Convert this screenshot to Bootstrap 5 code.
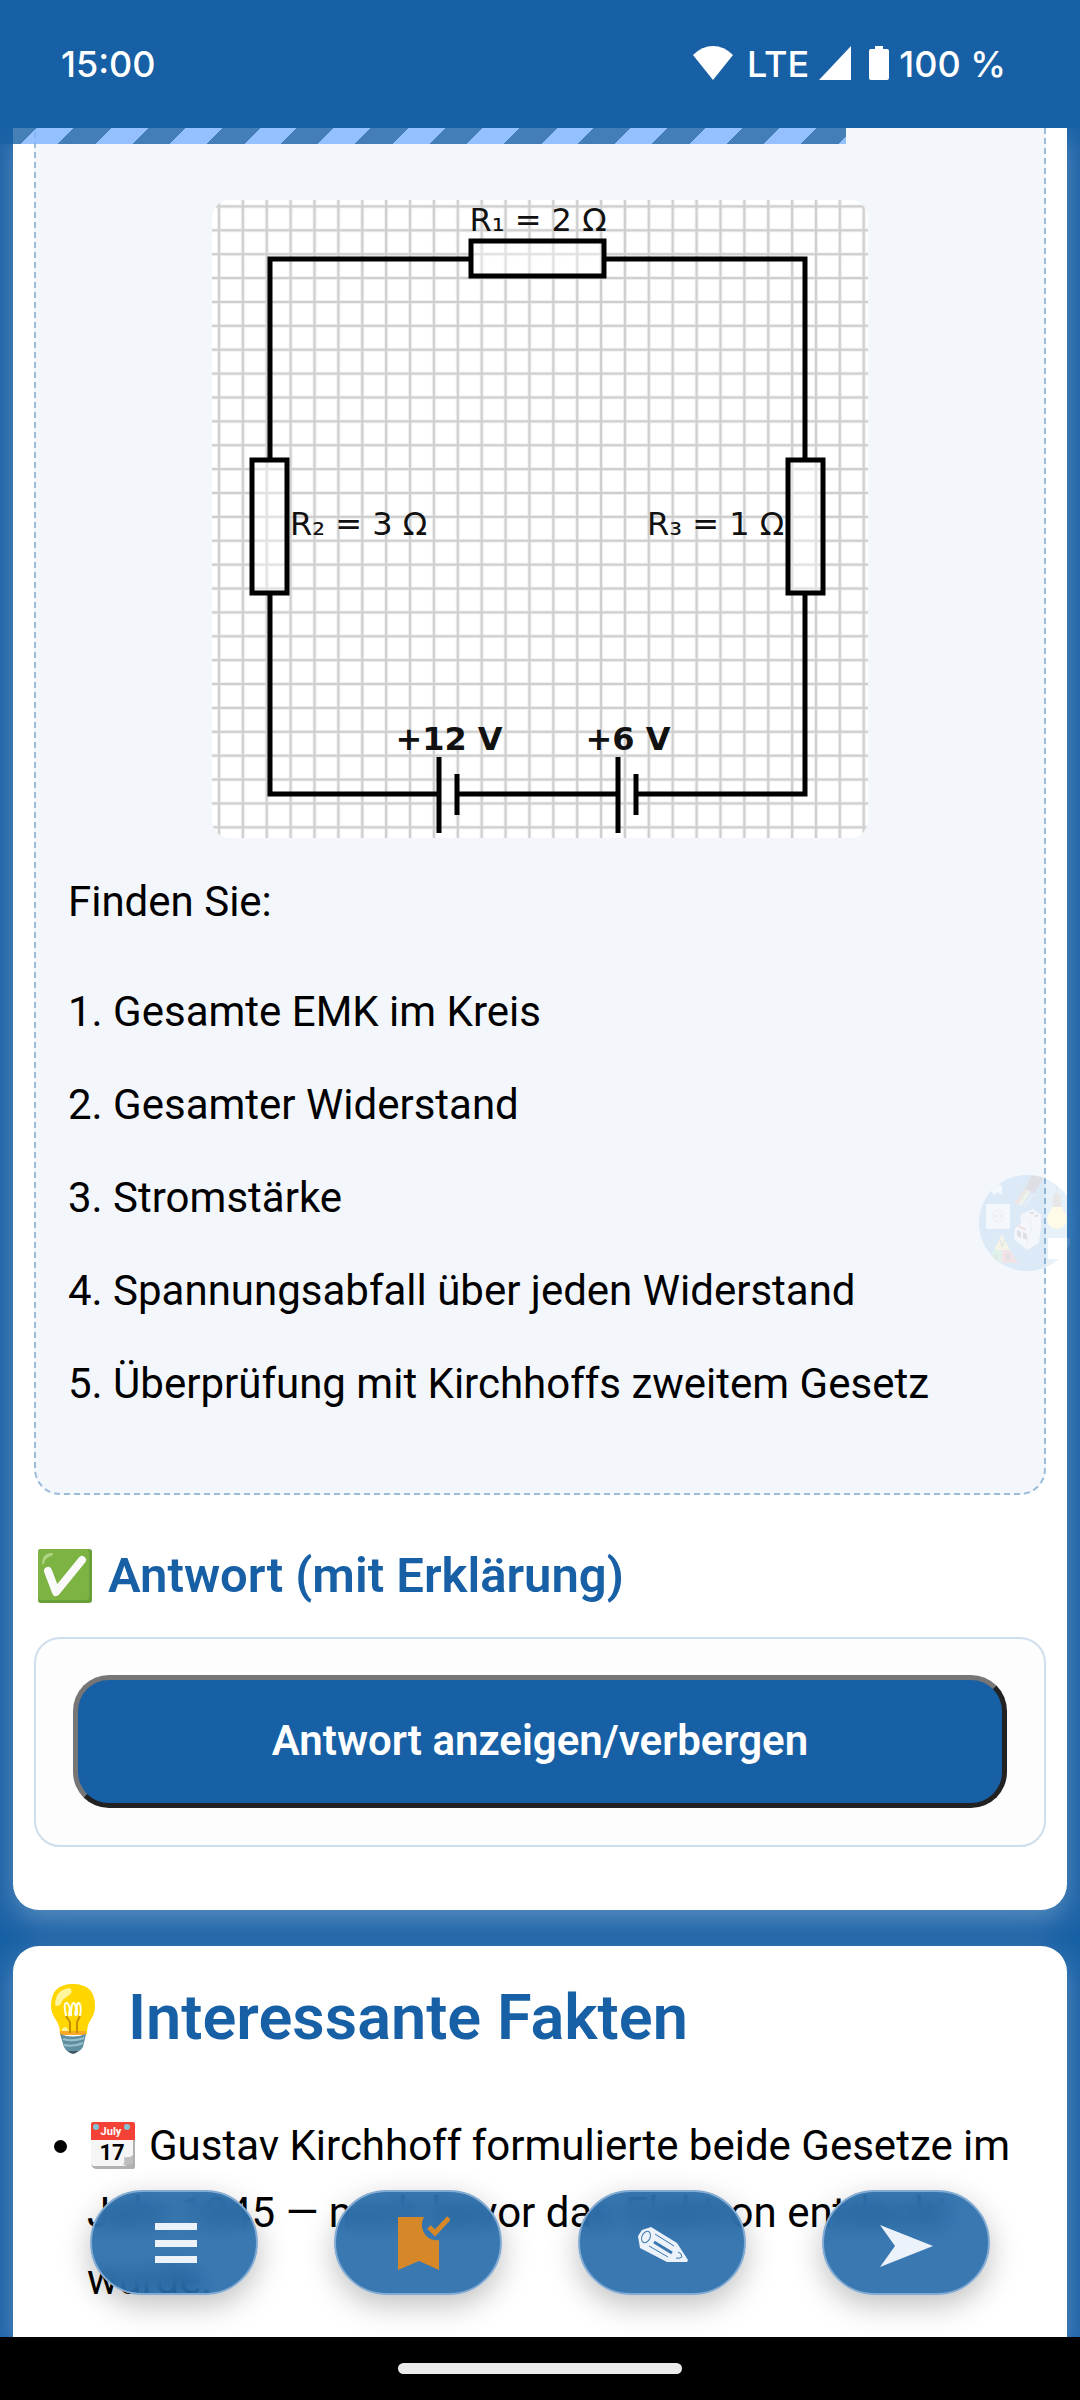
<!DOCTYPE html>
<html lang="de">
<head>
<meta charset="utf-8">
<meta name="viewport" content="width=device-width, initial-scale=1">
<title>Kirchhoffsche Gesetze</title>
<link href="https://cdn.jsdelivr.net/npm/bootstrap@5.3.0/dist/css/bootstrap.min.css" rel="stylesheet">
<style>
  :root { --brand: #1860a5; }
  body { background: var(--brand); color: #000; font-family: Roboto, sans-serif; font-size: 42px; line-height: 67px; }
  .status-bar { height: 128px; background: var(--brand); color: #fff; padding: 0 74px 0 61px; font: 500 36px/44px "Inter", sans-serif; }
  .status-bar svg, .fab svg { display: block; }
  .status-right { gap: 10px; }
  .status-right svg { margin-bottom: 2px; }
  .lesson { min-height: 0; padding: 0 13px; }
  .read-progress { top: 0; left: 0; width: 100%; height: 16px; z-index: 3; }
  .read-progress div { height: 16px; background: repeating-linear-gradient(135deg, rgba(24,96,165,.8) 0 26px, rgba(124,180,255,.8) 26px 52px, rgba(24,96,165,.8) 52px 79px, rgba(124,180,255,.8) 79px 105px); }
  .panel { background: #fff; border-radius: 26px; box-shadow: 0 10px 31px rgba(255,255,255,.3); padding: 0 21px 63px; }
  .panel-top { border-top-left-radius: 0; border-top-right-radius: 0; }
  .panel-end { margin-top: 36px; padding: 34px 21px 0; border-bottom-left-radius: 0; border-bottom-right-radius: 0; }
  .task { background: #f3f6fb; border: 2px dashed #9bbbdb; border-top: 0; border-radius: 0 0 26px 26px; padding: 72px 32px 50px; }
  .circuit { display: block; width: 70%; max-width: 656px; border-radius: 18px; margin: 0 auto 30px; }
  .task p { margin-bottom: 26px; }
  .task .intro { margin-bottom: 43px; }
  h2, h3 { color: var(--brand); font-weight: 600; }
  h3 { font-size: 49px; line-height: 60px; margin: 51px 0 31px; gap: 12px; }
  h2 { font-size: 63px; line-height: 76px; margin-bottom: 56px; gap: 21px; }
  .answer { background: #fdfdfd; border: 2px solid #cfdeec; border-radius: 26px; padding: 36px 37px 37px; }
  .btn-answer { background: var(--brand); color: #fff; border: 5px solid; border-color: #767676 #222 #222 #767676; border-radius: 36px; height: 133px; padding: 5px 12px 8px; font-size: 42px; font-weight: 600; }
  .btn-answer:hover { background: var(--brand); color: #fff; }
  .facts { padding-left: 53px; }
  .facts svg { vertical-align: -9px; margin: 0 14px 0 4px; }
  .helper { top: 1047px; right: 5px; width: 96px; height: 96px; z-index: 2; opacity: .11; border: 0; padding: 0; background: none; }
  .helper svg { display: block; }
  .fabs { left: 0; right: 0; bottom: 42px; gap: 76px; z-index: 4; }
  .fab { width: 168px; height: 105px; border-radius: 53px; border: 2px solid #82abd3; background: rgba(24,96,165,.85); backdrop-filter: blur(10px); box-shadow: 0 10px 31px rgba(0,0,0,.25); padding: 0; color: #ecf2f9; }
  .home-bar { height: 63px; background: #000; padding-top: 26px; }
  .home-bar div { width: 284px; height: 11px; border-radius: 6px; background: #ebebeb; }
</style>
</head>
<body>
<div class="d-flex flex-column vh-100 overflow-hidden">
  <header class="status-bar d-flex align-items-center justify-content-between flex-shrink-0">
    <span>15:00</span>
    <div class="status-right d-flex align-items-center">
      <svg width="40" height="34" viewBox="0 0 40 34" fill="#fff"><path d="M0 9Q9 0 20 0T40 9L20 34Z"/></svg>
      <span class="ms-1">LTE</span>
      <svg width="32" height="34" viewBox="0 0 32 34" fill="#fff"><path d="M32 0V34H0Z"/></svg>
      <svg class="ms-2" width="20" height="34" viewBox="0 0 20 34" fill="#fff"><path d="M6 0h8v3h4q2 0 2 2v27q0 2-2 2H2q-2 0-2-2V5q0-2 2-2h4Z"/></svg>
      <span>100 %</span>
    </div>
  </header>

  <main class="lesson position-relative flex-grow-1 overflow-hidden d-flex flex-column">
    <div class="read-progress position-absolute"><div style="width:78.3%"></div></div>

    <section class="panel panel-top flex-shrink-0">
      <div class="task">
        <svg class="circuit" viewBox="0 0 656 638" role="img" aria-label="Stromkreis mit drei Widerständen">
          <defs><pattern id="grid" x="-5" y="-5.5" width="23.88" height="23.88" patternUnits="userSpaceOnUse"><g fill="none" stroke="#000"><path d="M0 12H24M12 0V24" stroke-opacity=".06" stroke-width="4"/><path d="M0 12H24M12 0V24" stroke-opacity=".14" stroke-width="2"/></g></pattern></defs>
          <rect width="656" height="638" fill="#fff"/>
          <rect width="656" height="638" fill="url(#grid)"/>
          <g fill="none" stroke="#000" stroke-width="5">
            <path d="M259 59H58V260M392 59H593V260M58 393V594H227M245 594H406M424 594H593V393"/>
            <path d="M259 41H392V76H259ZM40 260H75V393H40ZM576 260H611V393H576Z" fill="#fff" fill-opacity=".4"/>
            <path d="M227 557V633M245 574V615M406 557V633M424 574V615"/>
          </g>
          <g font-family="DejaVu Sans, sans-serif" font-size="32" fill="#111">
            <text x="326" y="31" text-anchor="middle">R₁ = 2 Ω</text>
            <text x="78" y="335">R₂ = 3 Ω</text>
            <text x="435" y="335">R₃ = 1 Ω</text>
            <g font-weight="700" text-anchor="middle"><text x="237" y="550">+12 V</text><text x="416" y="550">+6 V</text></g>
          </g>
        </svg>
        <p class="intro">Finden Sie:</p>
        <p>1. Gesamte EMK im Kreis</p>
        <p>2. Gesamter Widerstand</p>
        <p>3. Stromstärke</p>
        <p>4. Spannungsabfall über jeden Widerstand</p>
        <p>5. Überprüfung mit Kirchhoffs zweitem Gesetz</p>
      </div>

      <h3 class="d-flex align-items-center">
        <svg width="62" height="60" viewBox="0 0 62 60" aria-hidden="true"><rect x="4" y="3" width="54" height="54" rx="3" fill="#689f38"/><rect x="4" y="3" width="51" height="51" rx="3" fill="#7cb342"/><path d="M8 18Q8 7 18 7Q21 8 17 10Q11 12 10 17Q9 20 8 18Z" fill="#aed581"/><path d="M14 25L22 46L48 14" fill="none" stroke="#fafafa" stroke-width="8" stroke-linecap="round" stroke-linejoin="round"/></svg>
        <span>Antwort (mit Erklärung)</span>
      </h3>
      <div class="answer">
        <button type="button" class="btn btn-answer w-100">Antwort anzeigen/verbergen</button>
      </div>
    </section>

    <section class="panel panel-end flex-grow-1">
      <h2 class="d-flex align-items-center">
        <svg width="73" height="76" viewBox="0 0 73 76" aria-hidden="true"><path d="M17 26Q17 4 39 4T61 26Q61 34 56 41Q53 45 53 54H26Q26 46 22 40Q17 33 17 26Z" fill="#ffd600"/><path d="M21 24Q22 9 36 8Q40 12 34 16Q28 19 27 24Q22 28 21 24Z" fill="#fff59d"/><path d="M28 53Q27 47 32 47L37 53Z" fill="#fff59d"/><path d="M26 51H52V55H26Z" fill="#f9a825"/><path d="M36 53V42L32 36M43 53V42L46 36" fill="none" stroke="#c58f00" stroke-width="2"/><path d="M32 36Q29 22 33 23Q37 26 35 34Q35 36 37 35Q37 22 40 23Q43 26 41 34Q42 36 43 34Q42 22 45 23Q48 26 46 36" fill="none" stroke="#fffde7" stroke-width="2"/><path d="M26 54Q39 59 52 54L49 67Q45 73 39 73T30 67Z" fill="#5f8fa1"/><path d="M29 59Q39 62 50 58M30 65Q40 67 49 63" fill="none" stroke="#97c0cc" stroke-width="2"/><path d="M34 71H44Q42 74 39 74T34 71Z" fill="#455a64"/></svg>
        <span>Interessante Fakten</span>
      </h2>
      <ul class="facts mb-0">
        <li><svg width="44" height="47" viewBox="0 0 44 47" aria-hidden="true"><path d="M2 4H44V45Q44 47 42 47H6Q1 47 0 42Z" fill="#b0b0b0"/><path d="M0 16H42V36L34 44H3Q0 44 0 41Z" fill="#f5f5f5"/><path d="M2 0H42Q44 0 44 2V18H0V2Q0 0 2 0Z" fill="#f44336"/><path d="M32 43Q34 41 33 35Q39 36 42 33V41Q41 43 32 43Z" fill="#bdbdbd"/><circle cx="5" cy="5" r="3" fill="#82c4d4"/><circle cx="36" cy="5" r="3" fill="#82c4d4"/><text x="20" y="13" font-size="11" font-weight="700" fill="#fff" text-anchor="middle">July</text><text x="21" y="38" font-size="22" font-weight="700" text-anchor="middle">17</text></svg>Gustav Kirchhoff formulierte beide Gesetze im Jahr 1845 — noch bevor das Elektron entdeckt wurde.</li>
      </ul>
    </section>

    <button type="button" class="helper position-absolute" aria-label="Elektro-Assistent">
      <svg width="96" height="96" viewBox="0 0 96 96"><defs><clipPath id="disc"><circle cx="48" cy="48" r="48"/></clipPath></defs><g clip-path="url(#disc)">
        <rect width="96" height="96" fill="#2c86cf"/>
        <path d="M10 12l6-5 7 4v9l-5-3-3 4z" fill="#fff"/>
        <path d="M53 0H66L55 19L46 14Z" fill="#333"/><path d="M47 14L37 29" stroke="#c96b35" stroke-width="3"/><path d="M50 16L41 30" stroke="#f1df54" stroke-width="3"/><path d="M54 18L45 32" stroke="#77aee0" stroke-width="3"/>
        <rect x="7" y="29" width="24" height="25" rx="1" fill="#fff"/><circle cx="19" cy="41" r="6" fill="#eee" stroke="#bbb"/><path d="M16 41h1m4 0h1" stroke="#333" stroke-width="2"/>
        <path d="M41 40L54 34L62 40V51L60 68L48 75L35 64L36 53L42 49Z" fill="#f8f8f8"/><path d="M41 40L52 45V55L47 73" fill="none" stroke="#bbb"/><path d="M38 55l4 2v6l-4-2zm6 2l4 2v6l-4-2zM51 37h4v2h-4zm5 3h3v2h-3z" fill="#333"/><path d="M39 51l8 4" stroke="#d33" stroke-width="2"/>
        <path d="M23 59L31 75H15Z" fill="#f3e04e"/><path d="M15 75H23V88H9Z" fill="#4ec365"/><path d="M23 75H31L39 88H23Z" fill="#e9515a"/>
        <text x="23" y="72" font-size="9" text-anchor="middle">V</text><text x="17" y="86" font-size="9" text-anchor="middle">I</text><text x="29" y="86" font-size="9" text-anchor="middle">R</text>
        <path d="M78 0V20" stroke="#222"/><path d="M75 19h6l2 14H73z" fill="#333"/><circle cx="78" cy="44" r="10" fill="#ffe033"/><path d="M73 32h10l3 8H70z" fill="#ffe033"/>
        <rect x="69" y="63" width="22" height="21" fill="#fff"/></g></svg>
    </button>

    <nav class="fabs position-absolute d-flex justify-content-center" aria-label="Werkzeuge">
      <button type="button" class="fab" aria-label="Menü"><svg class="mx-auto" width="64" height="60" viewBox="-2 0 64 60" fill="currentColor"><path d="M11 10H53V17H11ZM11 27H53V34H11ZM11 43H53V50H11Z"/></svg></button>
      <button type="button" class="fab" aria-label="Lesezeichen"><svg class="mx-auto" width="64" height="60" viewBox="-2 0 64 60" fill="#d68828"><path d="M10 4H36C30 15 38 29 51 27V57L31 48L10 57Z"/><path d="M41 14L47 20L61 5" fill="none" stroke="#d68828" stroke-width="5"/></svg></button>
      <button type="button" class="fab" aria-label="Notiz"><svg class="mx-auto" width="64" height="60" viewBox="-2 0 64 60" fill="currentColor"><path d="M6 23L10 17L19 14L45 30L56 47L55 49H35L8 35Z"/><g fill="none" stroke="#3a77b1" stroke-width="1"><ellipse cx="14" cy="24" rx="4" ry="6" transform="rotate(25 14 24)"/><path d="M23 21L42 33M17 33L36 44M46 39Q50 40 50 44M44 45Q47 46 50 44"/><path d="M22 29L40 40" stroke-width="3"/></g></svg></button>
      <button type="button" class="fab" aria-label="Weiter"><svg class="mx-auto" width="64" height="60" viewBox="-2 0 64 60" fill="currentColor"><path d="M4 12L57 33L4 54L19 33Z"/></svg></button>
    </nav>
  </main>

  <footer class="home-bar flex-shrink-0"><div class="mx-auto"></div></footer>
</div>
<script src="https://cdn.jsdelivr.net/npm/bootstrap@5.3.0/dist/js/bootstrap.bundle.min.js"></script>
</body>
</html>
